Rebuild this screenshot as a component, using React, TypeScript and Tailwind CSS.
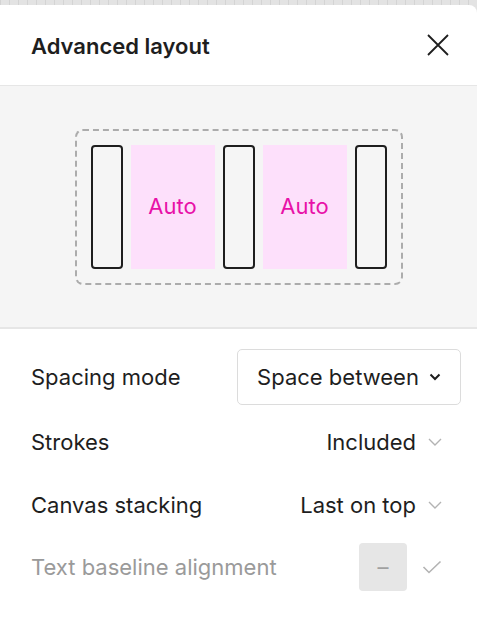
import React from "react";

const FONT = "font-['Inter','Noto_Sans',sans-serif]";

function CloseIcon() {
  return (
    <svg width="24" height="24" viewBox="0 0 24 24" className="text-[#1e1e1e]">
      <path d="M2 2L22 22M22 2L2 22" stroke="currentColor" strokeWidth="1.8" fill="none" />
    </svg>
  );
}

function Chevron({ strong }: { strong?: boolean }) {
  return strong ? (
    <svg width="12" height="8" viewBox="0 0 12 8">
      <path d="M1.5 1.5L6 6L10.5 1.5" stroke="#1e1e1e" strokeWidth="2" fill="none" />
    </svg>
  ) : (
    <svg width="14" height="8" viewBox="0 0 14 8">
      <path d="M1 1L7 7L13 1" stroke="#b3b3b3" strokeWidth="1.4" fill="none" />
    </svg>
  );
}

function Check() {
  return (
    <svg width="20" height="14" viewBox="0 0 20 14">
      <path d="M1.5 7L7 12.5L18.5 1.5" stroke="#b3b3b3" strokeWidth="1.6" fill="none" />
    </svg>
  );
}

function Bar() {
  return <div className="w-[32px] rounded-[4px] border-2 border-[#1e1e1e] bg-[#f5f5f5]" />;
}

function AutoBox() {
  return (
    <div className="flex w-[84px] items-center justify-center bg-[#fde0fb] text-[22px] text-[#e811a8]">
      Auto
    </div>
  );
}

export default function App() {
  return (
    <div className={`${FONT} h-[627px] w-[477px] overflow-hidden bg-[repeating-linear-gradient(90deg,#d4d4d4_0_1px,#e3e3e3_1px_9px)]`}>
      <div className="mt-[5px] h-[622px] rounded-tr-[8px] bg-white">
        <div className="flex h-[81px] items-center justify-between border-b border-[#e6e6e6] pl-[31px] pr-[27px]">
          <h2 className="pt-[2px] text-[22px] font-semibold text-[#1e1e1e]">Advanced layout</h2>
          <CloseIcon />
        </div>

        <div className="flex h-[243px] items-center justify-center border-b-2 border-[#e6e6e6] bg-[#f5f5f5]">
          <div className="flex h-[156px] gap-[8px] rounded-[8px] border-2 border-dashed border-[#acacac] p-[14px]">
            <Bar />
            <AutoBox />
            <Bar />
            <AutoBox />
            <Bar />
          </div>
        </div>

        <div className="pt-[20px] text-[22px] text-[#1e1e1e]">
          <div className="flex h-[56px] items-center justify-between pl-[31px] pr-[16px]">
            <span>Spacing mode</span>
            <div className="flex h-[56px] w-[224px] items-center justify-center gap-[10px] rounded-[5px] border border-[#dcdcdc]">
              <span>Space between</span>
              <Chevron strong />
            </div>
          </div>
          <div className="flex h-[72px] items-center justify-between pl-[31px] pr-[35px] pt-[2px]">
            <span>Strokes</span>
            <div className="flex items-center gap-[12px]">
              <span>Included</span>
              <Chevron />
            </div>
          </div>
          <div className="flex h-[56px] items-center justify-between pl-[31px] pr-[35px]">
            <span>Canvas stacking</span>
            <div className="flex items-center gap-[12px]">
              <span>Last on top</span>
              <Chevron />
            </div>
          </div>
          <div className="flex h-[66px] items-center justify-between pl-[31px] pr-[35px] pt-[2px]">
            <span className="text-[#9a9a9a]">Text baseline alignment</span>
            <div className="flex items-center gap-[15px]">
              <div className="flex h-[48px] w-[48px] items-center justify-center rounded-[4px] bg-[#e6e6e6] text-[#a0a0a0]">
                –
              </div>
              <Check />
            </div>
          </div>
        </div>
      </div>
    </div>
  );
}
